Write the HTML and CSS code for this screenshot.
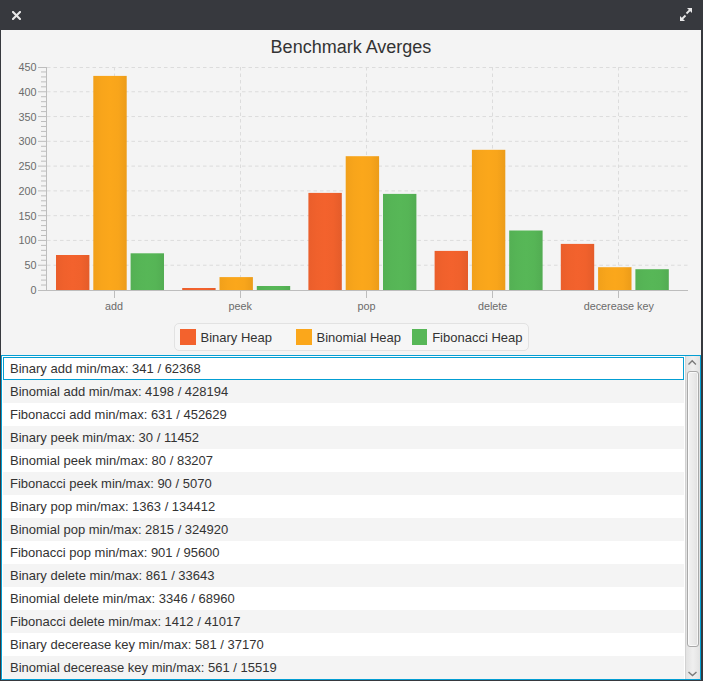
FILE: index.html
```html
<!DOCTYPE html>
<html>
<head>
<meta charset="utf-8">
<title>Benchmark Averges</title>
<link rel="stylesheet" href="styles.css">
</head>
<body>
<div class="window">
  <div class="titlebar">
    <svg class="tb-icon close" width="9" height="9" viewBox="0 0 9 9"><path d="M1 1L8 8M8 1L1 8" stroke="#e8e8e8" stroke-width="2.1" stroke-linecap="square"/></svg>
    <svg class="tb-icon expand" width="12" height="13" viewBox="0 0 12 13">
      <polygon points="7,0 12,0 12,5" fill="#e8e8e8"/>
      <path d="M10 2L6.5 5.5" stroke="#e8e8e8" stroke-width="1.8"/>
      <polygon points="0,8 0,13 5,13" fill="#e8e8e8"/>
      <path d="M2 11L5.5 7.5" stroke="#e8e8e8" stroke-width="1.8"/>
    </svg>
  </div>
  <div class="content">
    <div class="chart">
      <div class="chart-title">Benchmark Averges</div>
      <svg class="plot" width="700" height="260" viewBox="1 58 700 260">
        <defs>
          <linearGradient id="gRed" x1="0" x2="1" y1="0" y2="0">
            <stop offset="0" stop-color="#ea5e2b"/><stop offset="0.25" stop-color="#f0612c"/><stop offset="0.5" stop-color="#f3622d"/><stop offset="0.75" stop-color="#f0612c"/><stop offset="1" stop-color="#e45c2a"/>
          </linearGradient>
          <linearGradient id="gOrange" x1="0" x2="1" y1="0" y2="0">
            <stop offset="0" stop-color="#f1a01a"/><stop offset="0.25" stop-color="#f8a51b"/><stop offset="0.5" stop-color="#fba71b"/><stop offset="0.75" stop-color="#f8a51b"/><stop offset="1" stop-color="#ec9c19"/>
          </linearGradient>
          <linearGradient id="gGreen" x1="0" x2="1" y1="0" y2="0">
            <stop offset="0" stop-color="#54b054"/><stop offset="0.25" stop-color="#56b556"/><stop offset="0.5" stop-color="#57b757"/><stop offset="0.75" stop-color="#56b556"/><stop offset="1" stop-color="#52ac52"/>
          </linearGradient>
        </defs>
        <g class="grid">
          <path d="M47 265.22H688M47 240.44H688M47 215.67H688M47 190.89H688M47 166.11H688M47 141.33H688M47 116.56H688M47 91.78H688M47 67.5H688"/>
          <path d="M114.5 67V290M240.5 67V290M366.5 67V290M492.5 67V290M618.5 67V290"/>
        </g>
        <g class="ticks">
          <path d="M38 290.5h8M38 265.22h8M38 240.44h8M38 215.67h8M38 190.89h8M38 166.11h8M38 141.33h8M38 116.56h8M38 91.78h8M38 67.5h8"/>
          <path d="M41 285.04h5M41 280.09h5M41 275.13h5M41 270.18h5M41 260.27h5M41 255.31h5M41 250.36h5M41 245.40h5M41 235.49h5M41 230.53h5M41 225.58h5M41 220.62h5M41 210.71h5M41 205.76h5M41 200.80h5M41 195.84h5M41 185.93h5M41 180.98h5M41 176.02h5M41 171.07h5M41 161.16h5M41 156.20h5M41 151.24h5M41 146.29h5M41 136.38h5M41 131.42h5M41 126.47h5M41 121.51h5M41 111.60h5M41 106.64h5M41 101.69h5M41 96.73h5M41 86.82h5M41 81.87h5M41 76.91h5M41 71.96h5"/>
          <path d="M114.5 290v8M240.5 290v8M366.5 290v8M492.5 290v8M618.5 290v8"/>
        </g>
        <g class="bars">
          <rect x="56" y="255" width="33.4" height="35" fill="url(#gRed)"/>
          <rect x="93.3" y="75.9" width="33.4" height="214.1" fill="url(#gOrange)"/>
          <rect x="130.6" y="253.3" width="33.4" height="36.7" fill="url(#gGreen)"/>

          <rect x="182.2" y="288" width="33.4" height="2" fill="url(#gRed)"/>
          <rect x="219.5" y="277.1" width="33.4" height="12.9" fill="url(#gOrange)"/>
          <rect x="256.8" y="286" width="33.4" height="4" fill="url(#gGreen)"/>

          <rect x="308.4" y="192.9" width="33.4" height="97.1" fill="url(#gRed)"/>
          <rect x="345.7" y="156.2" width="33.4" height="133.8" fill="url(#gOrange)"/>
          <rect x="383" y="193.9" width="33.4" height="96.1" fill="url(#gGreen)"/>

          <rect x="434.6" y="250.9" width="33.4" height="39.1" fill="url(#gRed)"/>
          <rect x="471.9" y="149.8" width="33.4" height="140.2" fill="url(#gOrange)"/>
          <rect x="509.2" y="230.5" width="33.4" height="59.5" fill="url(#gGreen)"/>

          <rect x="560.8" y="243.9" width="33.4" height="46.1" fill="url(#gRed)"/>
          <rect x="598.1" y="267.2" width="33.4" height="22.8" fill="url(#gOrange)"/>
          <rect x="635.4" y="269.2" width="33.4" height="20.8" fill="url(#gGreen)"/>
        </g>
        <g class="axis">
          <path d="M46.5 67V290.5M46 290.5H688"/>
        </g>
        <g class="y-labels">
          <text x="36.5" y="294">0</text>
          <text x="36.5" y="269.2">50</text>
          <text x="36.5" y="244.4">100</text>
          <text x="36.5" y="219.7">150</text>
          <text x="36.5" y="194.9">200</text>
          <text x="36.5" y="170.1">250</text>
          <text x="36.5" y="145.3">300</text>
          <text x="36.5" y="120.6">350</text>
          <text x="36.5" y="95.8">400</text>
          <text x="36.5" y="71">450</text>
        </g>
        <g class="x-labels">
          <text x="114" y="310">add</text>
          <text x="240.2" y="310">peek</text>
          <text x="366.4" y="310">pop</text>
          <text x="492.6" y="310">delete</text>
          <text x="618.8" y="310">decerease key</text>
        </g>
      </svg>
      <div class="legend">
        <div class="legend-item"><span class="swatch red"></span><span>Binary Heap</span></div>
        <div class="legend-item"><span class="swatch orange"></span><span>Binomial Heap</span></div>
        <div class="legend-item"><span class="swatch green"></span><span>Fibonacci Heap</span></div>
      </div>
    </div>
    <div class="list">
      <div class="cells">
        <div class="cell selected">Binary add min/max: 341 / 62368</div>
        <div class="cell">Binomial add min/max: 4198 / 428194</div>
        <div class="cell">Fibonacci add min/max: 631 / 452629</div>
        <div class="cell">Binary peek min/max: 30 / 11452</div>
        <div class="cell">Binomial peek min/max: 80 / 83207</div>
        <div class="cell">Fibonacci peek min/max: 90 / 5070</div>
        <div class="cell">Binary pop min/max: 1363 / 134412</div>
        <div class="cell">Binomial pop min/max: 2815 / 324920</div>
        <div class="cell">Fibonacci pop min/max: 901 / 95600</div>
        <div class="cell">Binary delete min/max: 861 / 33643</div>
        <div class="cell">Binomial delete min/max: 3346 / 68960</div>
        <div class="cell">Fibonacci delete min/max: 1412 / 41017</div>
        <div class="cell">Binary decerease key min/max: 581 / 37170</div>
        <div class="cell">Binomial decerease key min/max: 561 / 15519</div>
      </div>
      <div class="scrollbar">
        <div class="sb-btn"><svg width="15" height="15" viewBox="0 0 15 15"><path d="M3.5 8.5L7.2 4.8L10.9 8.5" fill="none" stroke="#7a7a7a" stroke-width="1.4"/></svg></div>
        <div class="sb-track"><div class="sb-thumb"></div></div>
        <div class="sb-btn"><svg width="15" height="15" viewBox="0 0 15 15"><path d="M3.5 8L7.5 11.6L11.5 8" fill="none" stroke="#7a7a7a" stroke-width="1.4"/></svg></div>
      </div>
    </div>
  </div>
</div>
</body>
</html>
```
FILE: styles.css
```css
html, body {
  margin: 0;
  padding: 0;
}
body {
  background: #37393e;
  font-family: "Liberation Sans", Arial, sans-serif;
  color: #333333;
}
.window {
  width: 703px;
  height: 681px;
  display: flex;
  flex-direction: column;
  background: #37393e;
}
.titlebar {
  height: 30px;
  flex: 0 0 30px;
  display: flex;
  align-items: center;
  justify-content: space-between;
  padding: 0 11px 0 12px;
  box-sizing: border-box;
}
.tb-icon { display: block; }
.close { margin-top: 1px; }
.expand { margin-top: -2px; }
.content {
  margin: 0 2px 0 1px;
  height: 650px;
  display: flex;
  flex-direction: column;
}
.chart {
  height: 325px;
  flex: 0 0 325px;
  background: #f4f4f4;
  display: flex;
  flex-direction: column;
  align-items: center;
}
.chart-title {
  margin-top: 6px;
  height: 22px;
  line-height: 22px;
  font-size: 18px;
  color: #333333;
}
.plot {
  display: block;
  width: 700px;
  height: 260px;
}
.grid path {
  fill: none;
  stroke: #dcdcdc;
  stroke-width: 1;
  stroke-dasharray: 3.5 3;
}
.ticks path {
  fill: none;
  stroke: #bdbdbd;
  stroke-width: 1;
}
.axis path {
  fill: none;
  stroke: #bdbdbd;
  stroke-width: 1;
}
.y-labels text {
  font-family: "Liberation Sans", Arial, sans-serif;
  font-size: 10.8px;
  fill: #6b6b6b;
  text-anchor: end;
}
.x-labels text {
  font-family: "Liberation Sans", Arial, sans-serif;
  font-size: 10.8px;
  fill: #6b6b6b;
  text-anchor: middle;
}
.legend {
  margin-top: 5px;
  height: 28px;
  box-sizing: border-box;
  border: 1px solid #e2e2e2;
  border-radius: 5px;
  background: #f6f6f6;
  padding: 0 5px;
  display: grid;
  grid-template-columns: repeat(3, 111px);
  column-gap: 5px;
  align-items: center;
}
.legend-item {
  display: flex;
  align-items: center;
  gap: 5px;
  font-size: 13px;
  color: #333333;
  white-space: nowrap;
}
.swatch {
  width: 16px;
  height: 16px;
  display: block;
}
.swatch.red { background: #f3622d; }
.swatch.orange { background: #fba71b; }
.swatch.green { background: #57b757; }
.list {
  height: 325px;
  flex: 0 0 325px;
  box-sizing: border-box;
  border: 1px solid #039ed3;
  background: #ffffff;
  display: flex;
}
.cells {
  width: 682px;
  flex: 0 0 682px;
  box-sizing: border-box;
  padding: 1px 0 0 1px;
  overflow: hidden;
}
.cell {
  height: 23px;
  line-height: 23px;
  padding-left: 7px;
  box-sizing: border-box;
  font-size: 13px;
  color: #333333;
  white-space: nowrap;
  background: #ffffff;
}
.cell:nth-child(even) {
  background: #f4f4f4;
}
.cell.selected {
  border: 1px solid #039ed3;
  line-height: 21px;
  padding-left: 6px;
}
.scrollbar {
  margin-left: 1px;
  width: 15px;
  flex: 0 0 15px;
  display: flex;
  flex-direction: column;
  background: linear-gradient(to right, #e2e2e2, #efefef 50%, #e2e2e2);
  border-left: 1px solid #d2d2d2;
  box-sizing: border-box;
}
.sb-btn {
  height: 15px;
  flex: 0 0 15px;
}
.sb-btn svg { display: block; margin-left: -1px; }
.sb-track {
  flex: 1;
}
.sb-thumb {
  margin: 0 1px;
  height: 276px;
  box-sizing: border-box;
  border: 1px solid #a9a9a9;
  border-radius: 3px;
  background: linear-gradient(to right, #f2f2f2, #e9e9e9 60%, #e0e0e0);
  box-shadow: inset 0 0 0 1px rgba(255,255,255,0.7);
}
```
